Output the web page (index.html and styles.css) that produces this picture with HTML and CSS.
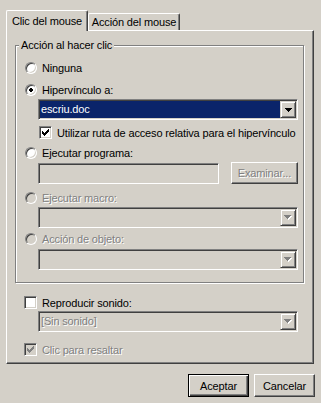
FILE: index.html
```html
<!DOCTYPE html>
<html lang="es">
<head>
    <meta charset="UTF-8">
    <title>Configuración de la acción</title>
    <link rel="stylesheet" href="styles.css">
</head>
<body>
    <div class="dialog">
        <div class="tabs">
            <div class="tab tab-active">Clic del mouse</div>
            <div class="tab tab-next">Acción del mouse</div>
        </div>

        <div class="panel">
            <div class="group">
                <div class="group-title">Acción al hacer clic</div>
                <div class="group-body">
                    <div class="opt"><span class="radio"></span>Ninguna</div>

                    <div class="opt opt-hyper">
                        <span class="radio"><svg width="4" height="4" viewBox="0 0 4 4" shape-rendering="crispEdges"><path d="M1 0h2v1h1v2h-1v1h-2v-1h-1v-2h1z" fill="#000"/></svg></span>Hipervínculo a:
                    </div>
                    <div class="combo combo-hyper">
                        <span class="combo-text selected">escriu.doc</span>
                        <span class="drop"><svg width="7" height="4" viewBox="0 0 7 4" shape-rendering="crispEdges"><path d="M0 0h7v1h-7zM1 1h5v1h-5zM2 2h3v1h-3zM3 3h1v1h-1z" fill="#000"/></svg></span>
                    </div>

                    <div class="opt opt-box opt-relative">
                        <span class="check"><svg width="7" height="7" viewBox="0 0 7 7" shape-rendering="crispEdges"><path d="M6 0h1v1h-1zM5 1h2v1h-2zM0 2h1v1h-1zM4 2h3v1h-3zM0 3h2v1h-2zM3 3h3v1h-3zM0 4h5v1h-5zM1 5h3v1h-3zM2 6h1v1h-1z" fill="#000"/></svg></span>Utilizar ruta de acceso relativa para el hipervínculo
                    </div>

                    <div class="opt opt-prog"><span class="radio"></span>Ejecutar programa:</div>
                    <div class="prog-row">
                        <div class="field"></div>
                        <button class="btn btn-browse" disabled>Examinar...</button>
                    </div>

                    <div class="opt opt-macro disabled"><span class="radio"></span>Ejecutar macro:</div>
                    <div class="combo combo-macro disabled">
                        <span class="combo-text"></span>
                        <span class="drop"><svg width="8" height="5" viewBox="0 0 8 5" shape-rendering="crispEdges"><path d="M1 1h7v1h-7zM2 2h5v1h-5zM3 3h3v1h-3zM4 4h1v1h-1z" fill="#fff"/><path d="M0 0h7v1h-7zM1 1h5v1h-5zM2 2h3v1h-3zM3 3h1v1h-1z" fill="#808080"/></svg></span>
                    </div>

                    <div class="opt opt-object disabled"><span class="radio"></span>Acción de objeto:</div>
                    <div class="combo combo-object disabled">
                        <span class="combo-text"></span>
                        <span class="drop"><svg width="8" height="5" viewBox="0 0 8 5" shape-rendering="crispEdges"><path d="M1 1h7v1h-7zM2 2h5v1h-5zM3 3h3v1h-3zM4 4h1v1h-1z" fill="#fff"/><path d="M0 0h7v1h-7zM1 1h5v1h-5zM2 2h3v1h-3zM3 3h1v1h-1z" fill="#808080"/></svg></span>
                    </div>
                </div>
            </div>

            <div class="sect">
                <div class="opt opt-box opt-sound"><span class="check"></span>Reproducir sonido:</div>
                <div class="combo combo-sound disabled">
                    <span class="combo-text">[Sin sonido]</span>
                    <span class="drop"><svg width="8" height="5" viewBox="0 0 8 5" shape-rendering="crispEdges"><path d="M1 1h7v1h-7zM2 2h5v1h-5zM3 3h3v1h-3zM4 4h1v1h-1z" fill="#fff"/><path d="M0 0h7v1h-7zM1 1h5v1h-5zM2 2h3v1h-3zM3 3h1v1h-1z" fill="#808080"/></svg></span>
                </div>
                <div class="opt opt-box opt-highlight disabled">
                    <span class="check"><svg width="7" height="7" viewBox="0 0 7 7" shape-rendering="crispEdges"><path d="M6 0h1v1h-1zM5 1h2v1h-2zM0 2h1v1h-1zM4 2h3v1h-3zM0 3h2v1h-2zM3 3h3v1h-3zM0 4h5v1h-5zM1 5h3v1h-3zM2 6h1v1h-1z" fill="#808080"/></svg></span>Clic para resaltar
                </div>
            </div>
        </div>

        <div class="actions">
            <button class="btn btn-default">Aceptar</button>
            <button class="btn">Cancelar</button>
        </div>
    </div>
</body>
</html>
```

FILE: styles.css
```css
body {
    margin: 0;
    background: #d4d0c8;
    font-family: "Liberation Sans", Arial, sans-serif;
    font-size: 11px;
    letter-spacing: -0.15px;
    color: #000;
}
.dialog {
    padding: 10px 0 0 6px;
}

/* pestañas */
.tabs {
    display: flex;
    align-items: flex-end;
    height: 20px;
}
.tab {
    box-sizing: border-box;
    height: 17px;
    display: flex;
    align-items: center;
    justify-content: center;
    border: 1px solid;
    border-bottom: none;
    border-color: #fff #404040 #fff #fff;
    box-shadow: inset -1px 0 #808080;
    border-radius: 2px 2px 0 0;
    white-space: nowrap;
}
.tab-active {
    width: 82px;
    height: 21px;
    margin-bottom: -1px;
    padding-bottom: 1px;
    position: relative;
    z-index: 1;
    background: #d4d0c8;
}
.tab-next {
    width: 92px;
}

.panel {
    box-sizing: border-box;
    width: 308px;
    border: 1px solid;
    border-color: #fff #404040 #404040 #fff;
    box-shadow: inset -1px -1px #808080;
    padding: 8px 8px 7px;
}

/* marco del grupo */
.group {
    margin: 6px 1px 0 0;
    border: 1px solid #808080;
    box-shadow: inset 1px 1px #fff, 1px 1px #fff;
}
.group-title {
    display: table;
    margin: -7px 0 0 3px;
    padding: 0 2px;
    line-height: 13px;
    background: #d4d0c8;
}
.group-body {
    padding: 9px 0 12px 8px;
}
.sect {
    padding-left: 9px;
}

/* opciones */
.opt {
    display: flex;
    align-items: center;
    height: 14px;
    white-space: nowrap;
}
.opt-box {
    height: 13px;
}
.opt-hyper { margin-top: 8px; }
.opt-relative { margin: 6px 0 0 15px; }
.opt-prog { margin-top: 7px; }
.opt-macro { margin-top: 7px; }
.opt-object { margin-top: 4px; }
.opt-sound { margin-top: 13px; }
.opt-highlight { margin-top: 11px; }

.disabled {
    color: #808080;
    text-shadow: 1px 1px #fff;
}

.radio,
.check {
    box-sizing: border-box;
    display: flex;
    align-items: center;
    justify-content: center;
    flex: none;
    border: 1px solid;
    border-color: #808080 #fff #fff #808080;
    box-shadow: inset 1px 1px #404040, inset -1px -1px #d4d0c8;
    background: #fff;
}
.radio {
    width: 12px;
    height: 12px;
    margin: 0 5px 0 1px;
    border-radius: 50%;
}
.check {
    width: 13px;
    height: 13px;
    margin-right: 5px;
}
.disabled .radio,
.disabled .check {
    background: #d4d0c8;
}
.radio svg,
.check svg,
.drop svg {
    display: block;
}

/* listas desplegables y campos */
.combo,
.field {
    box-sizing: border-box;
    border: 1px solid;
    border-color: #808080 #fff #fff #808080;
    box-shadow: inset 1px 1px #404040, inset -1px -1px #d4d0c8;
    background: #fff;
}
.combo {
    display: flex;
    width: 260px;
    height: 21px;
    margin-left: 14px;
    padding: 1px;
}
.combo.disabled {
    background: #d4d0c8;
}
.combo-hyper { margin-top: 2px; }
.combo-macro { margin-top: 2px; }
.combo-object { margin-top: 3px; }
.combo-sound { margin-top: 2px; }

.combo-text {
    flex: 1;
    padding-left: 1px;
    line-height: 17px;
    white-space: nowrap;
}
.selected {
    background: #0a246a;
    color: #fff;
}
.drop {
    box-sizing: border-box;
    display: flex;
    align-items: center;
    justify-content: center;
    width: 16px;
    height: 17px;
    border: 1px solid;
    border-color: #d4d0c8 #404040 #404040 #d4d0c8;
    box-shadow: inset 1px 1px #fff, inset -1px -1px #808080;
    background: #d4d0c8;
    text-shadow: none;
}

.prog-row {
    display: flex;
    height: 22px;
    margin-top: 2px;
}
.field {
    width: 181px;
    height: 21px;
    margin: 1px 0 0 14px;
    background: #d4d0c8;
}

/* botones */
.btn {
    box-sizing: border-box;
    font: inherit;
    letter-spacing: inherit;
    color: #000;
    background: #d4d0c8;
    border: 1px solid;
    border-color: #fff #404040 #404040 #fff;
    box-shadow: inset -1px -1px #808080;
    padding: 0;
}
.btn:disabled {
    color: #808080;
    text-shadow: 1px 1px #fff;
}
.btn-browse {
    width: 67px;
    height: 22px;
    margin-left: 12px;
}
.actions {
    display: flex;
    justify-content: flex-end;
    gap: 5px;
    margin-top: 10px;
    padding-right: 6px;
}
.actions .btn {
    width: 61px;
    height: 23px;
}
.actions .btn-default {
    border-color: #000;
    box-shadow: inset 1px 1px #fff, inset -1px -1px #404040, inset -2px -2px #808080;
}
```
